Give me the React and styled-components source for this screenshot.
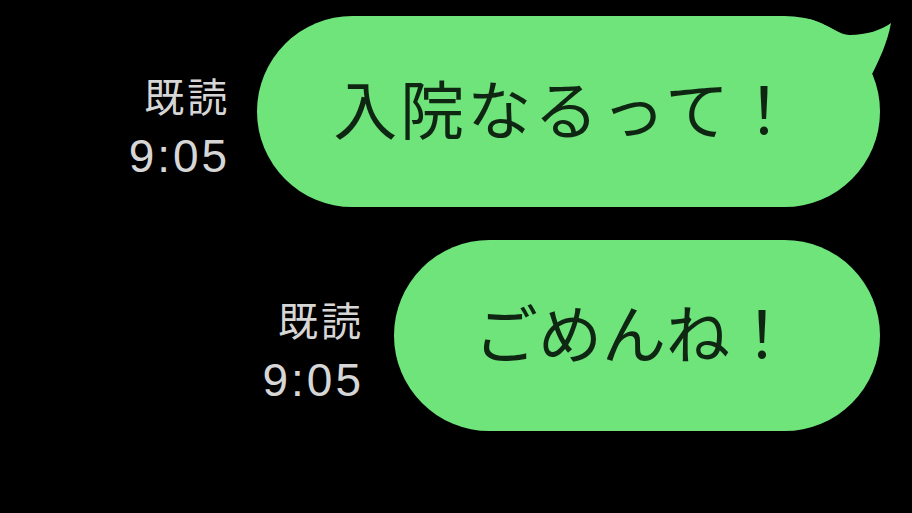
import React from 'react';
import styled, { createGlobalStyle } from 'styled-components';

const GlobalStyle = createGlobalStyle`
  html, body {
    margin: 0;
    padding: 0;
    background: #000;
  }
  body {
    font-family: "Noto Sans CJK JP", "Liberation Sans", sans-serif;
  }
`;

const Screen = styled.div`
  width: 912px;
  height: 513px;
  overflow: hidden;
  background: #000;
  display: flex;
  flex-direction: column;
  align-items: flex-end;
  gap: 33px;
  padding: 16px 32px 0 0;
  box-sizing: border-box;
`;

const Row = styled.div`
  display: flex;
  align-items: flex-end;
  gap: ${(p) => (p.$wide ? '27px' : '30px')};
`;

const Meta = styled.div`
  display: flex;
  flex-direction: column;
  align-items: flex-end;
  gap: 8px;
  margin-bottom: 24px;
  color: #d6d6d6;
`;

const Read = styled.span`
  font-family: "Noto Sans CJK JP", sans-serif;
  font-size: 40px;
  line-height: 52px;
  letter-spacing: 3px;
`;

const Time = styled.span`
  font-family: "Liberation Sans", "Noto Sans", sans-serif;
  font-size: 46px;
  line-height: 54px;
  letter-spacing: 3px;
`;

const Bubble = styled.div`
  position: relative;
  height: 191px;
  box-sizing: border-box;
  padding: ${(p) => (p.$wide ? '0 81px 12px 76px' : '0 86px 12px 80px')};
  display: flex;
  align-items: center;
  background: #6fe47b;
  border-radius: 96px;
  color: #0f2612;
  font-family: "Noto Sans CJK JP", sans-serif;
  font-size: 64px;
  letter-spacing: ${(p) => (p.$wide ? '3px' : '0')};
  white-space: nowrap;
`;

const Tail = styled.svg`
  position: absolute;
  top: 0;
  right: -15px;
  width: 95px;
  height: 80px;
`;

function Message({ text, tail, wide }) {
  return (
    <Row $wide={wide}>
      <Meta>
        <Read>既読</Read>
        <Time>9:05</Time>
      </Meta>
      <Bubble $wide={wide}>
        {tail && (
          <Tail viewBox="0 0 95 80">
            <path
              d="M0 2 C22 2 36 19 50 19 C66 19 82 14 91 7 C88 25 79 45 70 62 L40 62 L0 40 Z"
              fill="#6fe47b"
            />
          </Tail>
        )}
        {text}
      </Bubble>
    </Row>
  );
}

export default function App() {
  return (
    <>
      <GlobalStyle />
      <Screen>
        <Message text="入院なるって！" tail wide />
        <Message text="ごめんね！" />
      </Screen>
    </>
  );
}
